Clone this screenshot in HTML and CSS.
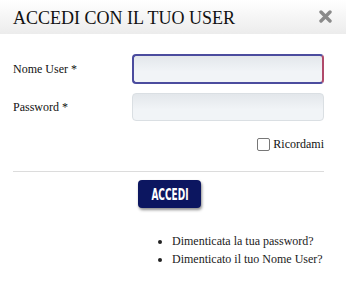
FILE: index.html
```html
<!DOCTYPE html>
<html lang="it">
<head>
  <meta charset="UTF-8">
  <title>Accedi</title>
  <link rel="stylesheet" href="styles.css">
</head>
<body>
  <div class="modal">
    <div class="top">
      <h1>ACCEDI CON IL TUO USER</h1>
      <svg class="close" width="13" height="13" viewBox="0 0 13 13">
        <path d="M2 2 L11 11 M11 2 L2 11" stroke="#8a8a8a" stroke-width="3.4" stroke-linecap="round"/>
      </svg>
    </div>
    <div class="form">
      <div class="row">
        <span class="label">Nome User *</span>
        <input type="text" class="field focus" autofocus>
      </div>
      <div class="row">
        <span class="label">Password *</span>
        <input type="password" class="field">
      </div>
      <div class="remember">
        <span class="box"></span>
        <span>Ricordami</span>
      </div>
      <div class="line"></div>
      <div class="actions">
        <button type="button" class="btn"><span>ACCEDI</span></button>
      </div>
      <ul class="links">
        <li>Dimenticata la tua password?</li>
        <li>Dimenticato il tuo Nome User?</li>
      </ul>
    </div>
  </div>
</body>
</html>
```

FILE: styles.css
```css
body {
  margin: 0;
  background: #fff;
  font-family: "Liberation Serif", "Times New Roman", serif;
  color: #111;
}
.modal {
  width: 346px;
  height: 284px;
  overflow: hidden;
}
.top {
  height: 34px;
  display: flex;
  align-items: center;
  justify-content: space-between;
  padding: 0 14px 0 13px;
  background: linear-gradient(#ffffff, #ececec);
}
h1 {
  margin: 0;
  font-size: 18px;
  font-weight: normal;
  color: #111;
  padding-top: 2px;
}
.close {
  margin-top: -2px;
}
.form {
  padding: 20px 22px 0 13px;
  font-size: 12px;
}
.row {
  display: flex;
  align-items: center;
  justify-content: space-between;
  margin-bottom: 9px;
}
.label {
  font-size: 12px;
}
.field {
  box-sizing: border-box;
  width: 192px;
  height: 28px;
  border: 1px solid #dadfe3;
  border-radius: 4px;
  background: linear-gradient(#e3e7eb, #f1f4f7 60%);
  margin: 0;
  padding: 0 5px;
  font-size: 13px;
}
.field.focus {
  height: 30px;
  border: 2px solid #4b4c9e;
  border-right-color: #b04a6a;
  border-radius: 4px;
  outline: none;
  caret-color: #111;
}
.remember {
  display: flex;
  justify-content: flex-end;
  align-items: center;
  gap: 3px;
  font-size: 12px;
  margin-top: 16px;
}
.box {
  width: 11px;
  height: 11px;
  border: 1px solid #777;
  border-radius: 2px;
  background: #fff;
}
.line {
  border-top: 1px solid #dcdcdc;
  margin-top: 19px;
  width: 311px;
}
.actions {
  padding-left: 125px;
  margin-top: 8px;
}
.btn {
  width: 63px;
  height: 28px;
  background: #0c1660;
  color: #fff;
  border: none;
  border-radius: 4px;
  box-shadow: 1px 2px 3px rgba(0, 0, 0, 0.45);
  padding: 0;
  display: flex;
  align-items: center;
  justify-content: center;
}
.btn span {
  display: inline-block;
  font-family: "DejaVu Sans", sans-serif;
  font-weight: bold;
  font-size: 15px;
  transform: scaleX(0.6);
  margin-top: 1px;
}
.links {
  margin: 24px 0 0 0;
  padding-left: 159px;
  font-size: 12px;
  color: #222;
  line-height: 18px;
  white-space: nowrap;
}
```
